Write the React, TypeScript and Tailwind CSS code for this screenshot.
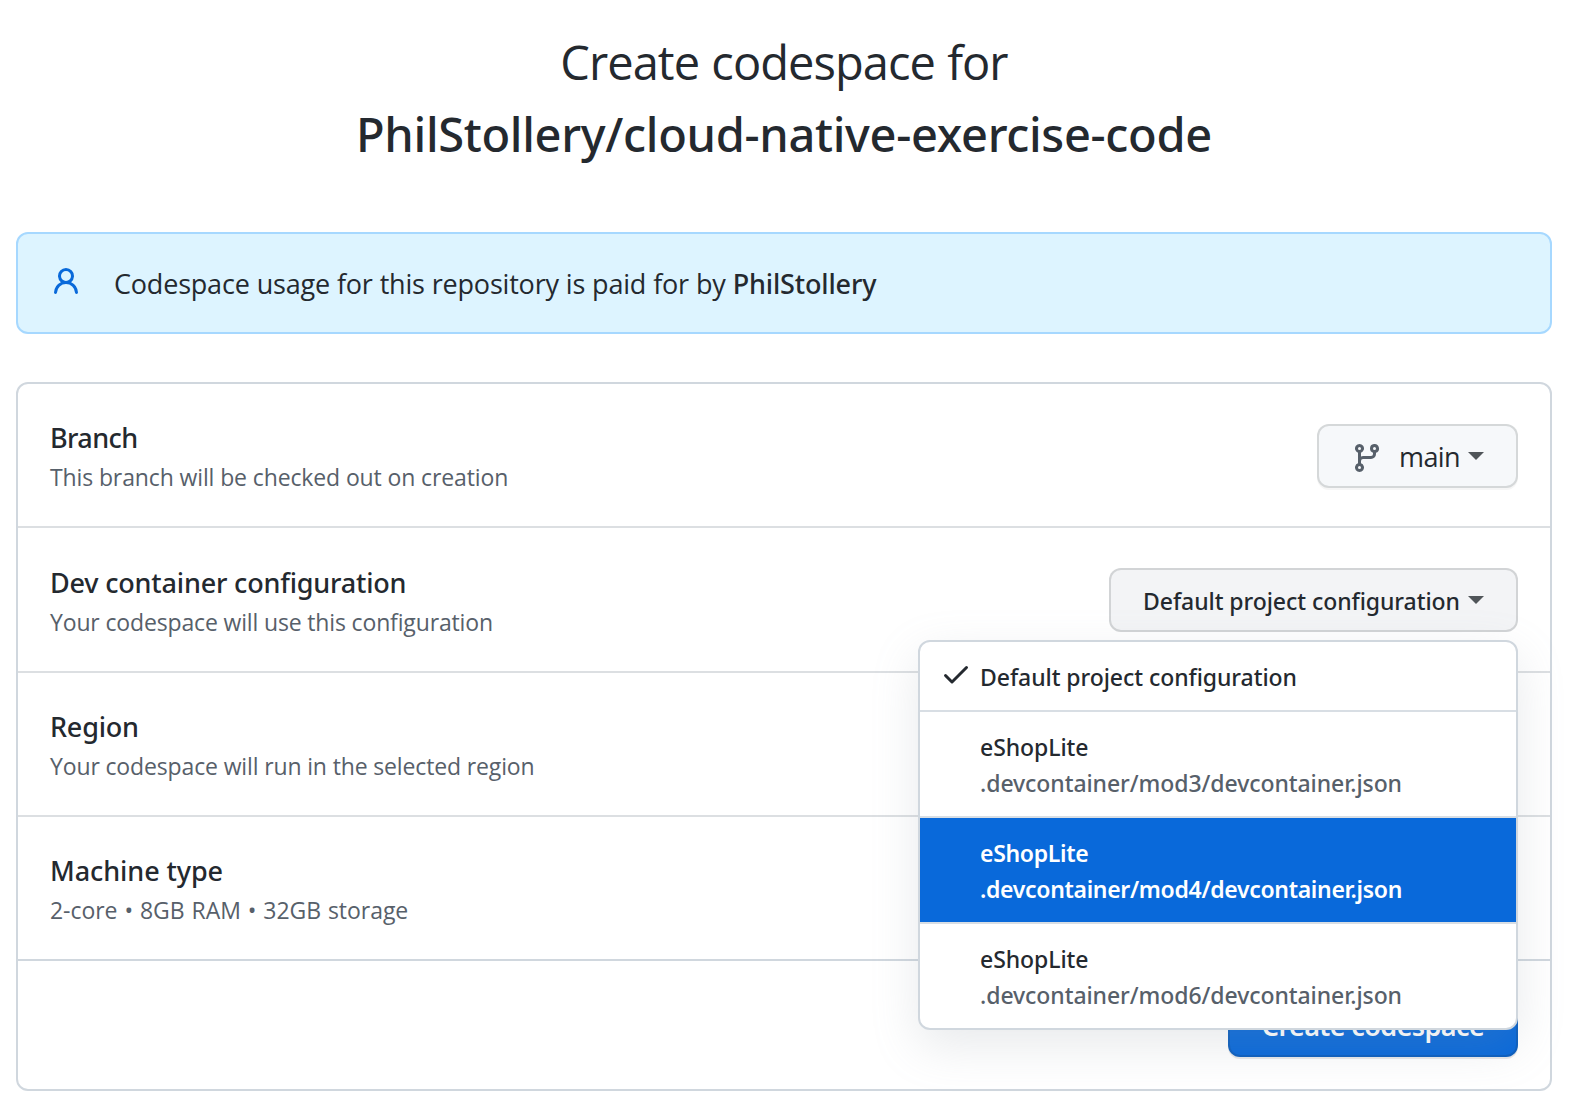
import React from "react";

function PersonIcon() {
  return (
    <svg viewBox="0 0 16 16" className="-mt-0.5 size-8 shrink-0 fill-[#0969da]">
      <path
        fillRule="evenodd"
        d="M10.5 5a2.5 2.5 0 11-5 0 2.5 2.5 0 015 0zm.061 3.073a4 4 0 10-5.123 0 6.004 6.004 0 00-3.431 5.142.75.75 0 001.498.07 4.5 4.5 0 018.99 0 .75.75 0 101.498-.07 6.005 6.005 0 00-3.432-5.142z"
      />
    </svg>
  );
}

function BranchIcon() {
  return (
    <svg viewBox="0 0 16 16" className="mt-[3px] size-8 shrink-0 fill-[#57606a]">
      <path
        fillRule="evenodd"
        d="M11.75 2.5a.75.75 0 100 1.5.75.75 0 000-1.5zm-2.25.75a2.25 2.25 0 113 2.122V6A2.5 2.5 0 0110 8.5H6a1 1 0 00-1 1v1.128a2.251 2.251 0 11-1.5 0V5.372a2.25 2.25 0 111.5 0v1.836A2.492 2.492 0 016 7h4a1 1 0 001-1v-.628A2.25 2.25 0 019.5 3.25zM4.25 12a.75.75 0 100 1.5.75.75 0 000-1.5zM3.5 3.25a.75.75 0 111.5 0 .75.75 0 01-1.5 0z"
      />
    </svg>
  );
}

function CheckIcon() {
  return (
    <svg viewBox="0 0 16 16" className="-mt-1 size-8 shrink-0 fill-[#24292f]">
      <path
        fillRule="evenodd"
        d="M13.78 4.22a.75.75 0 010 1.06l-7.25 7.25a.75.75 0 01-1.06 0L2.22 9.28a.75.75 0 011.06-1.06L6 10.94l6.72-6.72a.75.75 0 011.06 0z"
      />
    </svg>
  );
}

function Caret() {
  return (
    <span className="ml-auto size-0 border-x-8 border-t-8 border-x-transparent border-t-[#505559]" />
  );
}

function Row({
  title,
  titleClass,
  detail,
  detailClass,
  rowClass,
  children,
}: {
  title: string;
  titleClass: string;
  detail: string;
  detailClass: string;
  rowClass: string;
  children?: React.ReactNode;
}) {
  return (
    <div className={`flex justify-between border-b-2 px-8 ${rowClass}`}>
      <div>
        <h2
          className={`font-['Noto_Sans',sans-serif] text-[27px] leading-[44px] font-medium ${titleClass}`}
        >
          {title}
        </h2>
        <p className={`text-[23px] leading-[34px] text-[#57606a] ${detailClass}`}>{detail}</p>
      </div>
      {children}
    </div>
  );
}

function ConfigOption({ path, selected = false }: { path: string; selected?: boolean }) {
  return (
    <li
      className={
        selected
          ? "h-[106px] border-b-2 border-[#d8dee4] bg-[#0969da] pt-[17px] pl-[60px] font-semibold tracking-[-0.32px] text-white"
          : "h-[106px] border-b-2 border-[#d8dee4] pt-[17px] pl-[60px] tracking-[-0.07px] last:h-[104px] last:border-b-0"
      }
    >
      <div>eShopLite</div>
      <div className={selected ? "text-white" : "text-[#57606a]"}>{path}</div>
    </li>
  );
}

function ConfigMenu() {
  return (
    <ul className="absolute top-[72px] right-0 z-10 w-[600px] overflow-hidden rounded-xl border-2 border-[#d0d7de] bg-white font-['Noto_Sans',sans-serif] text-[23px] leading-9 font-medium shadow-[0_16px_48px_rgba(140,149,159,0.2)]">
      <li className="flex h-[70px] items-center gap-2 border-b-2 border-[#d8dee4] pl-5">
        <CheckIcon />
        <span className="pt-0.5 tracking-[-0.06px]">Default project configuration</span>
      </li>
      <ConfigOption path=".devcontainer/mod3/devcontainer.json" />
      <ConfigOption path=".devcontainer/mod4/devcontainer.json" selected />
      <ConfigOption path=".devcontainer/mod6/devcontainer.json" />
    </ul>
  );
}

export default function App() {
  return (
    <main className="h-[1116px] w-[1590px] overflow-hidden bg-white pt-[26px] pr-[38px] pl-4 font-['Open_Sans',sans-serif] text-[#24292f]">
      <h1 className="text-center text-[47px] leading-[72px]">
        <span className="block tracking-[-0.95px] [word-spacing:1px]">Create codespace for</span>
        <span className="block font-['Noto_Sans',sans-serif] font-medium tracking-[-0.32px]">
          PhilStollery/cloud-native-exercise-code
        </span>
      </h1>

      <div className="mt-[62px] flex h-[102px] items-center gap-8 rounded-xl border-2 border-[#a6d8ff] bg-[#ddf4ff] px-8">
        <PersonIcon />
        <p className="pt-0.5 text-[27px] leading-[42px] tracking-[-0.2px] [word-spacing:0.2px]">
          Codespace usage for this repository is paid for by{" "}
          <strong className="font-['Noto_Sans',sans-serif] font-medium tracking-[-0.15px]">
            PhilStollery
          </strong>
        </p>
      </div>

      <section className="mt-12 rounded-xl border-2 border-[#d0d7de]">
        <Row
          title="Branch"
          titleClass="tracking-[-0.6px]"
          detail="This branch will be checked out on creation"
          detailClass="tracking-[-0.12px]"
          rowClass="h-36 border-[#dcdfe2] pt-8"
        >
          <button className="mt-2 flex h-16 w-[201px] items-center rounded-xl border-2 border-[#1b1f24]/15 bg-[#f6f8fa] px-8 text-[27px] tracking-[-0.6px] shadow-[0_2px_0_rgba(27,31,36,0.04)]">
            <BranchIcon />
            <span className="pt-0.5 pl-4">main</span>
            <Caret />
          </button>
        </Row>
        <Row
          title="Dev container configuration"
          titleClass="tracking-[-0.18px]"
          detail="Your codespace will use this configuration"
          detailClass="tracking-[-0.15px]"
          rowClass="h-[145px] border-[#dcdfe2] pt-[33px]"
        >
          <div className="relative mt-[7px] h-16">
            <button className="flex h-16 w-[409px] items-center rounded-xl border-2 border-[#1b1f24]/15 bg-[#f3f4f6] px-8 font-['Noto_Sans',sans-serif] text-[23px] font-medium tracking-[-0.06px]">
              <span className="pt-0.5">Default project configuration</span>
              <Caret />
            </button>
            <ConfigMenu />
          </div>
        </Row>
        <Row
          title="Region"
          titleClass="tracking-[-0.2px]"
          detail="Your codespace will run in the selected region"
          detailClass="tracking-[-0.14px]"
          rowClass="h-36 border-[#dcdfe2] pt-8"
        />
        <Row
          title="Machine type"
          titleClass="tracking-[-0.08px]"
          detail="2-core • 8GB RAM • 32GB storage"
          detailClass="tracking-[-0.04px] [word-spacing:1px]"
          rowClass="h-36 border-[#d0d7de] pt-8"
        />
        <div className="flex h-32 justify-end p-8">
          <button className="h-16 w-[290px] rounded-xl border-2 border-[#1b1f24]/15 bg-[#0969da] pt-0.5 font-['Noto_Sans',sans-serif] text-[27px] font-semibold tracking-[-0.6px] text-white shadow-[0_2px_0_rgba(27,31,36,0.1)]">
            Create codespace
          </button>
        </div>
      </section>
    </main>
  );
}
